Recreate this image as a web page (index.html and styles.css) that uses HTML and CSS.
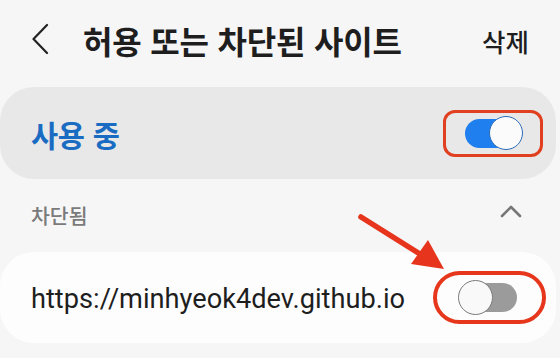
FILE: index.html
```html
<!DOCTYPE html>
<html lang="ko">
<head>
<meta charset="utf-8">
<link rel="stylesheet" href="styles.css">
</head>
<body>
<div class="screen">
  <header class="topbar">
    <span class="back">
      <svg width="18" height="32" viewBox="0 0 18 32"><path d="M15 2 L1.5 16 L15 30" fill="none" stroke="#222" stroke-width="2.2" stroke-linecap="round" stroke-linejoin="round"/></svg>
    </span>
    <h1 class="title">허용 또는 차단된 사이트</h1>
    <span class="delete">삭제</span>
  </header>

  <section class="card card-master">
    <span class="master-label">사용 중</span>
    <span class="hl-box">
      <span class="switch switch-on"><span class="thumb"></span></span>
    </span>
  </section>

  <div class="section-head">
    <span class="section-label">차단됨</span>
    <svg class="collapse" width="22" height="13" viewBox="0 0 22 13"><path d="M2 11 L11 2 L20 11" fill="none" stroke="#777" stroke-width="2.6" stroke-linecap="round" stroke-linejoin="round"/></svg>
  </div>

  <section class="card card-site">
    <span class="site-url">https://minhyeok4dev.github.io</span>
    <span class="hl-oval">
      <span class="switch switch-off"><span class="thumb"></span></span>
    </span>
  </section>

  <svg class="arrow" width="560" height="358" viewBox="0 0 560 358">
    <line x1="361" y1="217" x2="420" y2="254" stroke="#e6351c" stroke-width="5.5" stroke-linecap="round"/>
    <polygon points="444,269 411,264 428,240" fill="#e6351c"/>
  </svg>
</div>
</body>
</html>
```

FILE: styles.css
```css
html, body {
  margin: 0;
  padding: 0;
}
body {
  background: #f6f6f6;
  font-family: "Noto Sans CJK KR", "Noto Sans", Roboto, sans-serif;
  width: 560px;
  height: 358px;
  overflow: hidden;
}
.screen {
  position: relative;
  width: 560px;
  height: 358px;
}
.topbar {
  height: 80px;
  display: flex;
  align-items: center;
  padding: 0 31px 0 32px;
  box-sizing: border-box;
}
.back {
  display: flex;
  width: 18px;
  height: 32px;
  margin-top: -2px;
}
.title {
  margin: 0 0 0 33px;
  font-size: 32px;
  font-weight: 700;
  color: #1e1e1e;
  flex: 1;
  letter-spacing: -0.2px;
  line-height: 1;
}
.delete {
  font-size: 25.5px;
  font-weight: 500;
  color: #1e1e1e;
}
.card {
  width: 556px;
  box-sizing: border-box;
  display: flex;
  align-items: center;
  border-radius: 34px;
}
.card-master {
  margin-top: 7px;
  height: 92px;
  background: #e8e8e8;
  padding: 0 13px 0 31px;
}
.master-label {
  flex: 1;
  font-size: 29.5px;
  font-weight: 700;
  color: #1a6cc2;
  margin-top: 2px;
  letter-spacing: -0.3px;
}
.hl-box {
  width: 100px;
  height: 47px;
  box-sizing: border-box;
  border: 3px solid #e0401f;
  border-radius: 12px;
  display: flex;
  align-items: center;
  justify-content: center;
}
.switch {
  position: relative;
  display: block;
  box-sizing: border-box;
  border-radius: 16px;
}
.switch-on {
  width: 57px;
  height: 29px;
  background: #1f7fee;
  margin-left: 1px;
}
.switch-on .thumb {
  position: absolute;
  right: -1px;
  top: -3px;
  width: 34px;
  height: 34px;
  box-sizing: border-box;
  border-radius: 50%;
  background: #fbfbfb;
  border: 1.5px solid #2a6cb8;
}
.section-head {
  height: 73px;
  display: flex;
  align-items: center;
  padding: 0 38px 0 31px;
  box-sizing: border-box;
}
.section-label {
  flex: 1;
  font-size: 20.5px;
  font-weight: 500;
  color: #7a7a7a;
  margin-top: -2px;
}
.collapse {
  margin-top: -8px;
}
.card-site {
  height: 91px;
  background: #fdfdfd;
  padding: 0 10px 0 31px;
}
.site-url {
  flex: 1;
  font-family: Roboto, "Noto Sans", sans-serif;
  font-size: 27.2px;
  color: #1e1e1e;
  margin-top: 2px;
}
.hl-oval {
  width: 113px;
  height: 53px;
  box-sizing: border-box;
  border: 4px solid #e6361c;
  border-radius: 27px;
  display: flex;
  align-items: center;
  justify-content: center;
}
.switch-off {
  width: 58px;
  height: 29px;
  background: #9b9b9b;
  margin-left: -4px;
}
.switch-off .thumb {
  position: absolute;
  left: -1px;
  top: -3px;
  width: 35px;
  height: 35px;
  box-sizing: border-box;
  border-radius: 50%;
  background: #f9f9f9;
  border: 1.5px solid #7a7a7a;
}
.arrow {
  position: absolute;
  left: 0;
  top: 0;
  pointer-events: none;
}
```
